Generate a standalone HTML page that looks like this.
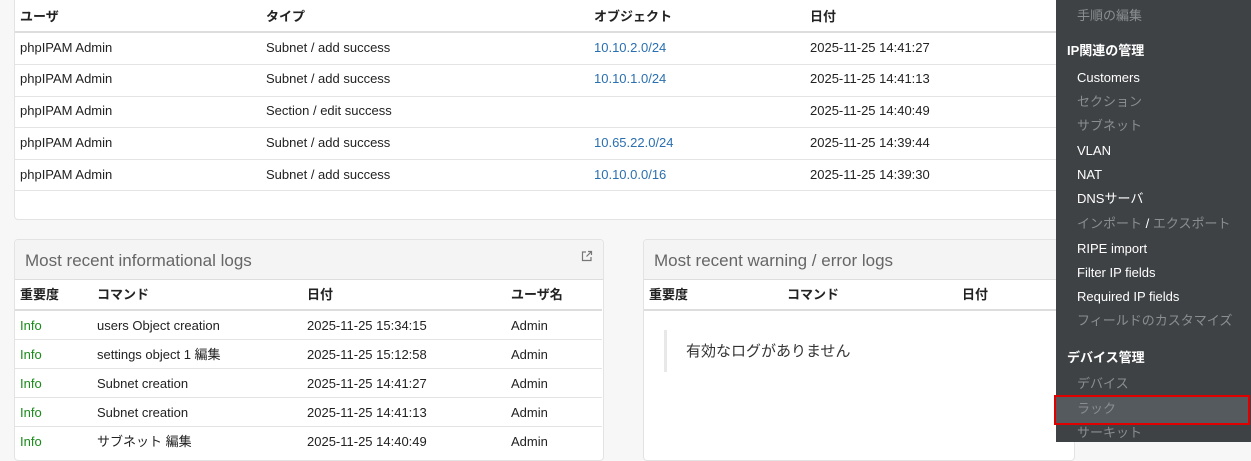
<!DOCTYPE html>
<html><head><meta charset="utf-8"><style>
body{margin:0;width:1251px;height:442px;overflow:hidden;background:#f7f7f7;font-family:"Liberation Sans","Noto Sans CJK JP",sans-serif;font-size:13px;color:#222;position:relative}
.a{position:absolute;white-space:nowrap;line-height:16px;margin-top:1px}
.panel{position:absolute;background:#fff;border:1px solid #e3e3e3;border-radius:4px}
.hl{position:absolute;height:1px;background:#e4e4e4}
.b{font-weight:bold}
.lnk{color:#2a6fb0}
.g{color:#1a8a1a}
.ph{position:absolute;background:#f4f4f4;border-bottom:1px solid #ddd;left:0;right:0;top:0;height:39px;border-radius:4px 4px 0 0}
.pt{position:absolute;font-size:17px;color:#666;top:11px;line-height:20px;white-space:nowrap}
#sb{position:absolute;left:1056px;top:0;width:195px;height:442px;background:#3e4245;color:#fff;z-index:5}
#sb .a{font-size:13px}
.dim{color:#8a8e91}
</style></head><body>
<div class="panel" style="left:14px;top:-4px;width:1060px;height:222px"></div>
<div class="hl" style="left:15px;top:31px;width:1041px;height:2px;background:#ddd"></div>
<div class="hl" style="left:15px;top:64px;width:1041px"></div>
<div class="hl" style="left:15px;top:96px;width:1041px"></div>
<div class="hl" style="left:15px;top:127px;width:1041px"></div>
<div class="hl" style="left:15px;top:159px;width:1041px"></div>
<div class="hl" style="left:15px;top:190px;width:1041px"></div>
<div class="a b" style="left:20px;top:8px">ユーザ</div>
<div class="a b" style="left:266px;top:8px">タイプ</div>
<div class="a b" style="left:594px;top:8px">オブジェクト</div>
<div class="a b" style="left:810px;top:8px">日付</div>
<div class="a" style="left:20px;top:39px">phpIPAM Admin</div><div class="a" style="left:266px;top:39px">Subnet / add success</div><div class="a lnk" style="left:594px;top:39px">10.10.2.0/24</div><div class="a" style="left:810px;top:39px">2025-11-25 14:41:27</div>
<div class="a" style="left:20px;top:70px">phpIPAM Admin</div><div class="a" style="left:266px;top:70px">Subnet / add success</div><div class="a lnk" style="left:594px;top:70px">10.10.1.0/24</div><div class="a" style="left:810px;top:70px">2025-11-25 14:41:13</div>
<div class="a" style="left:20px;top:102px">phpIPAM Admin</div><div class="a" style="left:266px;top:102px">Section / edit success</div><div class="a" style="left:810px;top:102px">2025-11-25 14:40:49</div>
<div class="a" style="left:20px;top:134px">phpIPAM Admin</div><div class="a" style="left:266px;top:134px">Subnet / add success</div><div class="a lnk" style="left:594px;top:134px">10.65.22.0/24</div><div class="a" style="left:810px;top:134px">2025-11-25 14:39:44</div>
<div class="a" style="left:20px;top:166px">phpIPAM Admin</div><div class="a" style="left:266px;top:166px">Subnet / add success</div><div class="a lnk" style="left:594px;top:166px">10.10.0.0/16</div><div class="a" style="left:810px;top:166px">2025-11-25 14:39:30</div>

<div class="panel" style="left:14px;top:239px;width:588px;height:220px"><div class="ph"></div><div class="pt" style="left:10px">Most recent informational logs</div>
<svg class="a" style="left:566px;top:9px" width="12" height="12" viewBox="0 0 12 12" fill="none" stroke="#777" stroke-width="1.2"><path d="M5 2H1.5v8.5H10V7M7 1.5h3.5V5M10.5 1.5L5.5 6.5"/></svg></div>
<div class="hl" style="left:15px;top:309px;width:587px;height:2px;background:#ddd"></div>
<div class="hl" style="left:15px;top:339px;width:587px"></div>
<div class="hl" style="left:15px;top:368px;width:587px"></div>
<div class="hl" style="left:15px;top:397px;width:587px"></div>
<div class="hl" style="left:15px;top:426px;width:587px"></div>
<div class="a b" style="left:20px;top:286px">重要度</div><div class="a b" style="left:97px;top:286px">コマンド</div><div class="a b" style="left:307px;top:286px">日付</div><div class="a b" style="left:511px;top:286px">ユーザ名</div>
<div class="a g" style="left:20px;top:317px">Info</div><div class="a" style="left:97px;top:317px">users Object creation</div><div class="a" style="left:307px;top:317px">2025-11-25 15:34:15</div><div class="a" style="left:511px;top:317px">Admin</div>
<div class="a g" style="left:20px;top:346px">Info</div><div class="a" style="left:97px;top:346px">settings object 1 編集</div><div class="a" style="left:307px;top:346px">2025-11-25 15:12:58</div><div class="a" style="left:511px;top:346px">Admin</div>
<div class="a g" style="left:20px;top:375px">Info</div><div class="a" style="left:97px;top:375px">Subnet creation</div><div class="a" style="left:307px;top:375px">2025-11-25 14:41:27</div><div class="a" style="left:511px;top:375px">Admin</div>
<div class="a g" style="left:20px;top:404px">Info</div><div class="a" style="left:97px;top:404px">Subnet creation</div><div class="a" style="left:307px;top:404px">2025-11-25 14:41:13</div><div class="a" style="left:511px;top:404px">Admin</div>
<div class="a g" style="left:20px;top:433px">Info</div><div class="a" style="left:97px;top:433px">サブネット 編集</div><div class="a" style="left:307px;top:433px">2025-11-25 14:40:49</div><div class="a" style="left:511px;top:433px">Admin</div>

<div class="panel" style="left:643px;top:239px;width:430px;height:220px"><div class="ph"></div><div class="pt" style="left:10px">Most recent warning / error logs</div></div>
<div class="hl" style="left:644px;top:309px;width:412px;height:2px;background:#ddd"></div>
<div class="a b" style="left:649px;top:286px">重要度</div><div class="a b" style="left:787px;top:286px">コマンド</div><div class="a b" style="left:962px;top:286px">日付</div>
<div class="a" style="left:664px;top:329px;width:3px;height:42px;background:#e8e8e8"></div>
<div class="a" style="left:686px;top:342px;font-size:15px;line-height:18px;color:#333">有効なログがありません</div>

<div id="sb">
<div class="a dim" style="left:21px;top:7px">手順の編集</div>
<div class="a b" style="left:11px;top:42px">IP関連の管理</div>
<div class="a" style="left:21px;top:69px">Customers</div>
<div class="a dim" style="left:21px;top:93px">セクション</div>
<div class="a dim" style="left:21px;top:117px">サブネット</div>
<div class="a" style="left:21px;top:142px">VLAN</div>
<div class="a" style="left:21px;top:166px">NAT</div>
<div class="a" style="left:21px;top:190px">DNSサーバ</div>
<div class="a dim" style="left:21px;top:215px">インポート <span style="color:#fff">/</span> エクスポート</div>
<div class="a" style="left:21px;top:240px">RIPE import</div>
<div class="a" style="left:21px;top:264px">Filter IP fields</div>
<div class="a" style="left:21px;top:288px">Required IP fields</div>
<div class="a dim" style="left:21px;top:312px">フィールドのカスタマイズ</div>
<div class="a b" style="left:11px;top:349px">デバイス管理</div>
<div class="a dim" style="left:21px;top:375px">デバイス</div>
<div class="a" style="left:-2px;top:394px;width:192px;height:26px;background:#555a5f;border:2px solid #e00000"></div>
<div class="a dim" style="left:21px;top:400px">ラック</div>
<div class="a dim" style="left:21px;top:424px">サーキット</div>
</div>
</body></html>
